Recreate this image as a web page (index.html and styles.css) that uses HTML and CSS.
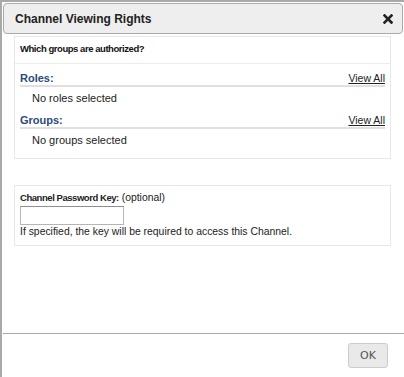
FILE: index.html
```html
<html>
<head>
  <link rel="stylesheet" href="styles.css">
</head>
<body>
  <div class="dialog">
    <div class="titlebar">
      <span class="title">Channel Viewing Rights</span>
      <svg class="close" width="10" height="10" viewBox="0 0 10 10">
        <path d="M1.5 1.5 L8.5 8.5 M8.5 1.5 L1.5 8.5" stroke="#222" stroke-width="2.6" stroke-linecap="square"/>
      </svg>
    </div>

    <div class="content">
      <div class="box">
        <div class="question">Which groups are authorized?</div>
        <div class="list">
          <div class="list-head">
            <span class="list-label">Roles:</span>
            <a class="view-all" href="#">View All</a>
          </div>
          <div class="list-empty">No roles selected</div>
          <div class="list-head">
            <span class="list-label">Groups:</span>
            <a class="view-all" href="#">View All</a>
          </div>
          <div class="list-empty">No groups selected</div>
        </div>
      </div>

      <div class="box password">
        <label for="key"><b>Channel Password Key:</b> (optional)</label>
        <input type="text" id="key">
        <div class="hint">If specified, the key will be required to access this Channel.</div>
      </div>
    </div>

    <div class="footer">
      <button class="ok">OK</button>
    </div>
  </div>
</body>
</html>
```

FILE: styles.css
```css
body {
  margin: 0;
  font-family: "Liberation Sans", Arial, sans-serif;
  background-color: #ffffff;
}

.dialog {
  height: 377px;
  box-sizing: border-box;
  border-top: 2px solid #a9a9a9;
  border-left: 2px solid #a9a9a9;
  padding-top: 1px;
  display: flex;
  flex-direction: column;
}

.titlebar {
  margin-left: 1px;
  margin-right: 1px;
  height: 29px;
  border: 1px solid #aaaaaa;
  border-radius: 4px;
  background-color: #eeeeee;
  display: flex;
  align-items: center;
  justify-content: space-between;
  padding: 0 9px 0 11px;
}

.title {
  font-size: 12px;
  font-weight: bold;
  color: #222222;
}

.close {
  display: block;
  margin-top: 1px;
}

.content {
  flex: 1;
  padding: 2px 13px 0 12px;
}

.box {
  border: 1px solid #e8e8e8;
  padding: 0 5px;
}

.question {
  font-size: 9.5px;
  font-weight: bold;
  letter-spacing: -0.45px;
  color: #111111;
  padding: 6px 0 9px 5px;
  margin: 0 -5px;
  border-bottom: 1px solid #ececec;
}

.list {
  padding-bottom: 10px;
}

.list-head {
  display: flex;
  justify-content: space-between;
  align-items: flex-end;
  border-bottom: 2px solid #e0e0e0;
  padding-top: 8px;
  padding-bottom: 1px;
}

.list-label {
  font-size: 11px;
  font-weight: bold;
  color: #2b4a7d;
}

.view-all {
  font-size: 10.5px;
  color: #222222;
}

.list-empty {
  font-size: 11px;
  color: #222222;
  padding: 5px 0 2px 12px;
}

.password {
  margin-top: 26px;
  padding-top: 6px;
  padding-bottom: 8px;
  font-size: 10.4px;
  color: #222222;
}

.password label {
  display: block;
  margin-bottom: 3px;
}

.password b {
  font-size: 9.5px;
  letter-spacing: -0.45px;
}

.password input {
  display: block;
  width: 104px;
  height: 19px;
  box-sizing: border-box;
  border: 1px solid #b5b5b5;
  border-top-color: #8e8e8e;
}

.hint {
  margin-top: 1px;
}

.footer {
  margin-left: 1px;
  border-top: 1px solid #a9a9a9;
  height: 43px;
  display: flex;
  align-items: center;
  justify-content: flex-end;
  padding-right: 16px;
}

.ok {
  width: 40px;
  height: 25px;
  font-family: "DejaVu Sans", sans-serif;
  font-size: 11px;
  color: #555555;
  background-color: #e9e9e9;
  border: 1px solid #cccccc;
  border-radius: 3px;
}
```
